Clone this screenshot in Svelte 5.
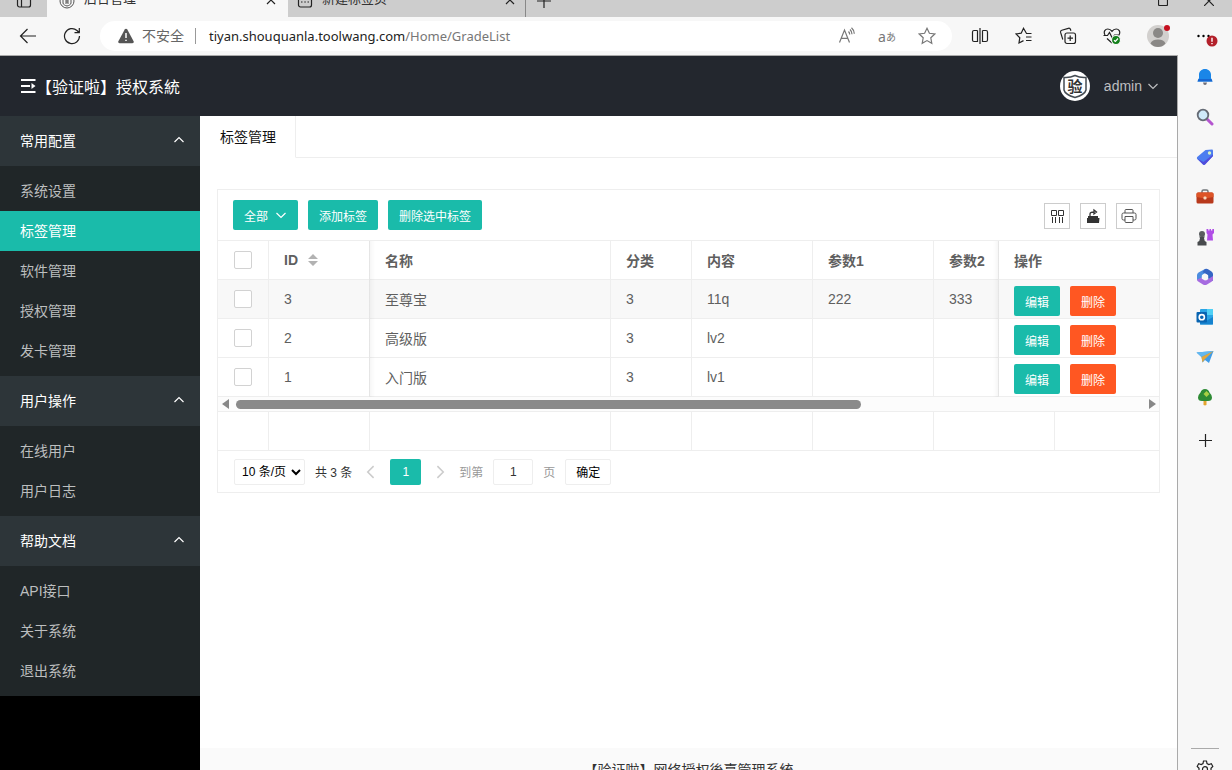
<script lang="ts">
  type Row = { id: number; name: string; type: string; content: string; p1: string; p2: string };

  const menu = [
    { title: '常用配置', items: ['系统设置', '标签管理', '软件管理', '授权管理', '发卡管理'] },
    { title: '用户操作', items: ['在线用户', '用户日志'] },
    { title: '帮助文档', items: ['API接口', '关于系统', '退出系统'] }
  ];

  let active = $state('标签管理');
  let hovered = $state(3);
  let page = $state('1');
  let selected: number[] = $state([]);

  const rows: Row[] = [
    { id: 3, name: '至尊宝', type: '3', content: '11q', p1: '222', p2: '333' },
    { id: 2, name: '高级版', type: '3', content: 'lv2', p1: '', p2: '' },
    { id: 1, name: '入门版', type: '3', content: 'lv1', p1: '', p2: '' }
  ];

  function toggleAll(e: Event) {
    selected = (e.target as HTMLInputElement).checked ? rows.map((r) => r.id) : [];
  }
</script>

{#snippet chevron(dir: string)}
  <svg class="chevron {dir}" viewBox="0 0 12 12" width="12" height="12"><path d="M1.5 4 6 8.5 10.500 4" /></svg>
{/snippet}

{#snippet columns()}
  <colgroup>
    <col class="w-check" /><col class="w-id" /><col class="w-name" /><col class="w-type" />
    <col class="w-param" /><col class="w-param" /><col class="w-param" /><col /><col class="w-action" />
  </colgroup>
{/snippet}

<div class="window">
  <div class="tabstrip">
    <button class="strip-btn" aria-label="标签页操作">
      <svg class="line" viewBox="0 0 16 16" width="16" height="16"><rect x="1.500" y="1.500" width="13" height="12.500" rx="2" /><path d="M5.500 5v9M1.500 5h13" /></svg>
    </button>
    <div class="btab current">
      <svg class="fav" viewBox="0 0 16 16" width="16" height="16"><circle cx="8" cy="8" r="7" /><path d="M4 4.500 8 3l4 1.500V10c0 1.500-2 2.500-4 3-2-.5-4-1.500-4-3zM6 6h4M6 8h4M6 10h4M8 6v4" /></svg>
      <span>后台管理</span>
      <button aria-label="关闭"><svg class="line" viewBox="0 0 10 10" width="10" height="10"><path d="m1 1 8 8M9 1 1 9" /></svg></button>
    </div>
    <div class="btab other">
      <svg class="line" viewBox="0 0 16 16" width="16" height="16"><rect x="1.500" y="2" width="13" height="12" rx="2" /><path d="M1.500 5h13M4 9h1.500M7.300 9h1.500M10.500 9H12" /></svg>
      <span>新建标签页</span>
      <button aria-label="关闭"><svg class="line" viewBox="0 0 10 10" width="10" height="10"><path d="m1 1 8 8M9 1 1 9" /></svg></button>
    </div>
    <button class="plus" aria-label="新建"><svg class="line" viewBox="0 0 14 14" width="14" height="14"><path d="M7 0v14M0 7h14" /></svg></button>
    <div class="winbtns">
      <svg class="line" viewBox="0 0 10 10" width="10" height="10"><rect x=".5" y=".5" width="9" height="9" rx="1" /></svg>
      <svg class="line" viewBox="0 0 10 10" width="10" height="10"><path d="m0 0 10 10M10 0 0 10" /></svg>
    </div>
  </div>

  <div class="toolbar">
    <button class="tool" aria-label="返回"><svg class="line" viewBox="0 0 18 18" width="18" height="18"><path d="M17 9H1.500M8.500 2l-7 7 7 7" /></svg></button>
    <button class="tool" aria-label="刷新"><svg class="line" viewBox="0 0 18 18" width="18" height="18"><path d="M16.500 9A7.500 7.500 0 1 1 14 3.500L16 5.500M16.300 1v4.700h-4.800" /></svg></button>
    <div class="address">
      <svg class="warn" viewBox="0 0 16 16" width="16" height="16"><path d="M8 .8c.6 0 1 .3 1.300.8l6.300 11.700c.5 1-.1 1.900-1.200 1.900H1.600c-1.100 0-1.700-.9-1.200-1.900L6.700 1.600C7 1.100 7.400.8 8 .8z" /><path class="mark" d="M8 5v5M8 11.700v1.400" /></svg>
      <span class="unsafe">不安全</span>
      <span class="url"><b>tiyan.shouquanla.toolwang.com</b>/Home/GradeList</span>
      <button class="tool" aria-label="朗读"><svg class="line gray" viewBox="0 0 18 18" width="18" height="18"><path d="M1.500 15.500 6.500 3l5 12.500M3.200 11.300h6.600M10.500 4.500q1.200 1.200 1.200 3M12 2.500q2 2 2 4.800M13.500.8q2.800 2.500 2.800 6" /></svg></button>
      <button class="tool translate" aria-label="翻译">a<small>あ</small></button>
      <button class="tool" aria-label="收藏"><svg class="line gray" viewBox="0 0 18 18" width="18" height="18"><path d="m9 1.300 2.400 5 5.400.7-4 3.800 1 5.500L9 13.600l-4.800 2.700 1-5.500-4-3.800 5.400-.7z" /></svg></button>
    </div>
    <div class="tools">
      <button class="tool" aria-label="分屏"><svg class="line" viewBox="0 0 18 18" width="18" height="18"><path d="M6.500 3.500H3a1.500 1.500 0 0 0-1.500 1.500v8A1.500 1.500 0 0 0 3 14.500h3.500V3.500M11.500 3.500H15A1.500 1.500 0 0 1 16.500 5v8a1.500 1.500 0 0 1-1.500 1.500h-3.500V3.500M9 1v16" /></svg></button>
      <button class="tool" aria-label="收藏夹"><svg class="line" viewBox="0 0 18 18" width="18" height="18"><path d="M16.500 6.500h-5L8.500 1.300 6.200 6.200 1 7l3.800 3.700L4 16l4.500-2.400M11 10h5.500M11 13.500h5.500" /></svg></button>
      <button class="tool" aria-label="集锦"><svg class="line" viewBox="0 0 18 18" width="18" height="18"><rect x="6" y="6" width="10.500" height="10.500" rx="2" /><path d="M11.200 8.500v5.500M8.500 11.200H14M3.800 12.500 1.600 5.400a1.800 1.800 0 0 1 1.200-2.200l6.500-1.900a1.800 1.800 0 0 1 2.200 1.200l.4 1.300" /></svg></button>
      <button class="tool" aria-label="浏览器概要"><svg class="line" viewBox="0 0 18 18" width="18" height="18"><path d="M2 8C0 4.500 2.500 2 4.800 2 7 2 8.300 3.300 9 4.300 9.700 3.300 11 2 13.200 2 15.500 2 18 4.500 16 8M.5 8.500h4l2-3 3 6 2-3.500h5M4 11.500l5 4.500" /><circle class="ok" cx="13" cy="13" r="4.500" /><path class="tick" d="m11 13.200 1.400 1.300 2.600-3" /></svg></button>
      <button class="tool profile" aria-label="个人资料">
        <svg viewBox="0 0 24 24" width="24" height="24"><circle cx="11" cy="12" r="11" fill="#d2d0ce" /><circle cx="11" cy="9" r="5" fill="#8a8886" /><path d="M3.500 19.500Q5 15.500 11 15.500t7.500 4Q15.500 23 11 23t-7.500-3.500z" fill="#8a8886" /><circle cx="20" cy="4" r="3" fill="#c50f1f" /></svg>
      </button>
      <button class="tool" aria-label="更多">
        <svg viewBox="0 0 24 24" width="24" height="24"><circle cx="4.500" cy="12" r="1.200" /><circle cx="9.500" cy="12" r="1.200" /><circle cx="14.500" cy="12" r="1.200" /><circle cx="18" cy="17" r="5.500" fill="#b3202a" /><path d="M18 13.800v4M18 19v1.300" stroke="#fff" stroke-width="1.400" /></svg>
      </button>
    </div>
  </div>

  <div class="below">
    <div class="app">
      <header>
        <a class="logo" href="/Home">
          <svg viewBox="0 0 16 16" width="16" height="16"><path d="M1 2h14.500M1 8h9M1 14h14.500" stroke="#fff" stroke-width="1.800" /><path d="M11.500 5l4 3-4 3z" fill="#fff" /></svg>【验证啦】授权系統
        </a>
        <button class="user">
          <svg class="face" viewBox="0 0 30 30" width="30" height="30"><circle cx="15" cy="15" r="15" fill="#fff" /><path d="M4 6.500Q10 7 15 4.500 20 7 26 6.500V19q-1 4.500-11 7.500Q5 23.500 4 19z" fill="none" stroke="#444b52" stroke-width="1.500" /><text x="15" y="20.500" text-anchor="middle">验</text></svg>
          <span>admin</span>
          {@render chevron('down')}
        </button>
      </header>

      <div class="layout">
        <nav>
          {#each menu as group}
            <section>
              <button class="group">{group.title}{@render chevron('up')}</button>
              <ul>
                {#each group.items as item}
                  <li><a href="#{item}" class:active={active === item} onclick={() => (active = item)}>{item}</a></li>
                {/each}
              </ul>
            </section>
          {/each}
        </nav>

        <main>
          <div class="pagetabs"><a href="#tab">标签管理</a></div>
          <div class="content">
            <div class="card">
              <div class="actions">
                <button class="btn">全部 {@render chevron('down')}</button>
                <button class="btn">添加标签</button>
                <button class="btn">删除选中标签</button>
                <div class="self">
                  <button aria-label="筛选列"><svg viewBox="0 0 16 16" width="16" height="16"><path d="M2.500 2.500h5v5h-5zM9.500 2.500h5v5h-5zM3.500 9v6M6.500 9v6M10.500 9v6M13.500 9v6" fill="none" stroke="#333" /></svg></button>
                  <button aria-label="导出"><svg viewBox="0 0 16 16" width="16" height="16"><path d="M2 10h12.500L14 15H2zM3 8h10v2H3z" fill="#333" /><path d="M5 8V6q0-2 4-2M9 2l2.500 2L9 6z" fill="none" stroke="#333" stroke-width="1.300" /></svg></button>
                  <button aria-label="打印"><svg viewBox="0 0 16 16" width="16" height="16"><path d="M4 5V2.500Q4 1.500 5 1.500h6q1 0 1 1V5M4 12H2.500Q1 12 1 10.500v-4Q1 5 2.500 5h11Q15 5 15 6.500v4q0 1.500-1.500 1.500H12M4 8.500h8v5q0 1-1 1H5q-1 0-1-1z" fill="none" stroke="#555" /></svg></button>
                </div>
              </div>

              <div class="scroll">
                <table>
                  {@render columns()}
                  <thead>
                    <tr>
                      <th><input type="checkbox" aria-label="全选" onchange={toggleAll} /></th>
                      <th class="pin-left">
                        ID <svg class="sort" viewBox="0 0 10 12" width="10" height="12"><path d="M0 5l5-5 5 5zM0 7h10l-5 5z" /></svg>
                      </th>
                      <th>名称</th>
                      <th>分类</th>
                      <th>内容</th>
                      <th>参数1</th>
                      <th>参数2</th>
                      <th></th>
                      <th class="pin-right">操作</th>
                    </tr>
                  </thead>
                  <tbody>
                    {#each rows as row}
                      <tr class:hover={hovered === row.id} onmouseenter={() => (hovered = row.id)}>
                        <td><input type="checkbox" aria-label={row.name} value={row.id} bind:group={selected} /></td>
                        <td class="pin-left">{row.id}</td>
                        <td>{row.name}</td>
                        <td>{row.type}</td>
                        <td>{row.content}</td>
                        <td>{row.p1}</td>
                        <td>{row.p2}</td>
                        <td></td>
                        <td class="pin-right">
                          <div class="ops">
                            <button class="btn">编辑</button>
                            <button class="btn danger">删除</button>
                          </div>
                        </td>
                      </tr>
                    {/each}
                  </tbody>
                </table>
              </div>

              <div class="bar">
                <svg viewBox="0 0 8 10" width="8" height="10"><path d="M7 0v10L0 5z" /></svg>
                <div class="track"><div class="thumb"></div></div>
                <svg viewBox="0 0 8 10" width="8" height="10"><path d="M1 0v10l7-5z" /></svg>
              </div>

              <div class="scroll">
                <table class="total">
                  {@render columns()}
                  <tbody>
                    <tr><td></td><td></td><td></td><td></td><td></td><td></td><td></td><td></td><td></td></tr>
                  </tbody>
                </table>
              </div>

              <div class="pager">
                <select aria-label="每页条数"><option>10 条/页</option></select>
                <span class="count">共 3 条</span>
                <button class="step" aria-label="上一页">{@render chevron('left')}</button>
                <button class="cur">1</button>
                <button class="step" aria-label="下一页">{@render chevron('right')}</button>
                <label for="page">到第</label>
                <input id="page" type="text" bind:value={page} />
                <span>页</span>
                <button class="go">确定</button>
              </div>
            </div>
          </div>
          <footer><p>【验证啦】网络授权後臺管理系統</p></footer>
        </main>
      </div>
    </div>

    <aside>
      <button aria-label="通知"><svg viewBox="0 0 18 18" width="18" height="18"><path d="M9 1C5.500 1 3 3.500 3 6.500V10l-1.500 3.500h15L15 10V6.500C15 3.500 12.500 1 9 1z" fill="#1a86e8" /><path d="M2.500 11h13l1 2.500h-15z" fill="#1766d0" /><path d="M7 14.500h4q-.4 2.500-2 2.500t-2-2.500z" fill="#6d6d78" /></svg></button>
      <button aria-label="搜索"><svg viewBox="0 0 18 18" width="18" height="18"><path d="m10.500 10.500 5.500 5.500" stroke="#b455cf" stroke-width="3" stroke-linecap="round" /><circle cx="7" cy="7" r="5.300" fill="#cfeafa" stroke="#656b75" stroke-width="1.800" /></svg></button>
      <button aria-label="购物"><svg viewBox="0 0 18 18" width="18" height="18"><path d="M9.500 2 16 1.500q1 0 1 1V8L9 16.500q-1 .8-2 0L1.200 11q-.8-1 0-2z" fill="#4c7df0" /><path d="M1.200 10.500 7.500 14 17 6.500V8L9 16.500q-1 .8-2 0z" fill="#514cdb" /><circle cx="13.500" cy="5" r="1.700" fill="#d6f0c4" /></svg></button>
      <button aria-label="工具"><svg viewBox="0 0 18 18" width="18" height="18"><path d="M6 5V3.500Q6 2 7.500 2h3Q12 2 12 3.500V5" fill="none" stroke="#72767a" stroke-width="1.500" /><rect x="0.500" y="4.500" width="17" height="11" rx="1.500" fill="#b8391c" /><path d="M.5 6q0-1.500 1.500-1.500h14q1.500 0 1.500 1.500v3L9 10.500.5 9z" fill="#dd5427" /><rect x="7.500" y="8.500" width="3" height="3" rx="1" fill="#f7d9c0" /></svg></button>
      <button aria-label="游戏"><svg viewBox="0 0 18 18" width="18" height="18"><path d="M10.500 1h1.800v1.500h1.200V1h1.500v1.500h1.300V1H18v4l-1.500 1.500.5 6h-6l.5-6L10.500 5z" fill="#b04ee6" /><circle cx="6" cy="6" r="3" fill="#5a5d60" /><path d="M3 8.500h6l-1 1.500q0 3 2.500 4v3.500h-9V14Q4 13 4 10z" fill="#484b4e" /></svg></button>
      <button aria-label="Microsoft 365"><svg viewBox="0 0 18 18" width="18" height="18"><path d="M9 1 2.500 4.500Q1 5.500 1 7v5.500l5-2.700V7l5-3z" fill="#4c8de0" /><path d="M9 1q2-.5 3.500.5L15.500 3.500Q17 4.500 17 6v7l-5-2.500V7L6.500 4z" fill="#3565c4" /><path d="M17 8v3.500q0 1.500-1.500 2.300L11 16.500q-2 1-4 0L3 14Q1 13 1 11.500l5-2 4 3z" fill="#a66be0" /><path d="m9 5.800 3.200 1.700v3.300L9 12.500l-3.200-1.700V7.500z" fill="#f7f7f7" /></svg></button>
      <button aria-label="Outlook"><svg viewBox="0 0 18 18" width="18" height="18"><rect x="4" y="1" width="13" height="15.500" rx="1" fill="#2aa5e6" /><path d="M11 1h6v6h-6z" fill="#50d0f5" /><path d="m4 9 7 3.500L17 9v7.500H4z" fill="#1683cf" /><rect x=".5" y="4" width="10.500" height="10.500" rx="1" fill="#0864b1" /><circle cx="5.800" cy="9.200" r="2.600" fill="none" stroke="#fff" stroke-width="1.600" /></svg></button>
      <button aria-label="Drop"><svg viewBox="0 0 18 18" width="18" height="18"><path d="M.5 4.500 17.500 3 13 15l-4-3-2.500 2.500L5.500 9z" fill="#3f9ce8" /><path d="M.5 4.500 17.500 3 5.500 9z" fill="#62b8ef" /><path d="M5.500 9 17.500 3 8.500 11.500l-2 3z" fill="#e2a73d" /></svg></button>
      <button aria-label="电子树"><svg viewBox="0 0 18 18" width="18" height="18"><path d="M7.500 11h3v6q-1.500.8-3 0z" fill="#e3a52f" /><path d="M9 1q3.500 0 4.500 3.500 2.500 2.500 2.500 5Q16 13 12 13H6Q2 13 2 9.500q0-2.500 2.500-5Q5.500 1 9 1z" fill="#2e8b35" /><path d="m10.500 3 3 3-3 3-3-3z" fill="#a8cf45" /></svg></button>
      <button class="add" aria-label="添加"><svg class="line" viewBox="0 0 13 13" width="13" height="13"><path d="M6.500 0v13M0 6.500h13" /></svg></button>
      <div class="settings">
        <button aria-label="设置"><svg class="line" viewBox="0 0 18 18" width="18" height="18"><path d="M7.500 1h3l.5 2.500 1.800 1 2.500-.8 1.500 2.600L15 8.300v1.900l1.800 1.700-1.500 2.600-2.500-.8-1.800 1-.5 2.500h-3L7 14.700l-1.800-1-2.500.8-1.500-2.600L3 10.200V8.300L1.200 6.300l1.500-2.600 2.500.8 1.800-1z" /><circle cx="9" cy="9.200" r="2.500" /></svg></button>
      </div>
    </aside>
  </div>

  <svg class="pointer" viewBox="0 0 28 32" width="28" height="32">
    <circle cx="13.500" cy="13.500" r="13.500" fill="#0bfb3c" />
    <path d="M13.500 13.500v15.500l3.500-3.300 2.500 5.500 2.200-1-2.400-5.400h4.700z" fill="#fff" stroke="#222" />
  </svg>
</div>

<style>
  :global(body) {
    font-family: 'Liberation Sans', 'Noto Sans CJK SC', sans-serif;
    font-size: 14px;
    color: #333;
  }

  .window {
    position: relative;
    height: 100vh;
    display: flex;
    flex-direction: column;
    overflow: hidden;
    background: #f7f7f7;
  }

  button,
  input,
  select {
    font: inherit;
    color: inherit;
    margin: 0;
    padding: 0;
    border: 0;
    background: none;
    box-sizing: border-box;
  }

  a {
    color: inherit;
    text-decoration: none;
  }

  svg {
    flex: none;
  }

  .line {
    fill: none;
    stroke: #222;
    stroke-width: 1.2;
  }

  .gray {
    stroke: #777;
  }

  .chevron {
    fill: none;
    stroke: currentColor;
    stroke-width: 1.2;
  }

  .up {
    transform: rotate(180deg);
  }

  .left {
    transform: rotate(90deg) scale(1.3);
  }

  .right {
    transform: rotate(-90deg) scale(1.3);
  }

  /* browser chrome */
  .tabstrip {
    height: 17px;
    display: flex;
    align-items: flex-end;
    background: #cdcdcd;
    overflow: hidden;
  }

  .strip-btn {
    width: 47px;
    height: 32px;
    display: grid;
    place-items: center;
  }

  .btab {
    width: 241px;
    height: 32px;
    padding: 0 12px;
    box-sizing: border-box;
    display: flex;
    align-items: center;
    gap: 9px;
    font-size: 13px;
    line-height: 28px;
  }

  .btab.current {
    background: #f7f7f7;
  }

  .btab.other {
    width: 237px;
    padding: 0 10px 0 9px;
  }

  .btab span {
    flex: 1;
    height: 32px;
  }

  .fav {
    fill: none;
    stroke: #555;
  }

  .plus {
    height: 32px;
    width: 36px;
    display: grid;
    place-items: center;
    border-left: 1px solid #888;
  }

  .winbtns {
    height: 32px;
    margin-left: auto;
    padding-right: 18px;
    display: flex;
    align-items: center;
    gap: 36px;
  }

  .toolbar {
    height: 38px;
    padding: 0 6px 0 8px;
    display: flex;
    align-items: center;
    gap: 4px;
  }

  .tool {
    width: 40px;
    height: 30px;
    display: grid;
    place-items: center;
  }

  .address {
    flex: 1;
    height: 30px;
    margin: 0 4px;
    padding: 0 5px 0 18px;
    display: flex;
    align-items: center;
    border-radius: 15px;
    background: #fff;
  }

  .warn {
    fill: #555;
  }

  .mark {
    stroke: #fff;
    stroke-width: 1.5;
  }

  .unsafe {
    padding: 0 11px 0 8px;
    border-right: 1px solid #999;
    line-height: 16px;
    color: #666;
  }

  .url {
    flex: 1;
    padding-left: 13px;
    font-family: 'Noto Sans', sans-serif;
    font-size: 13px;
    color: #777;
  }

  .url b {
    font-weight: 400;
    color: #222;
  }

  .translate {
    display: flex;
    align-items: center;
    justify-content: center;
    font-family: 'Noto Sans', 'Noto Sans CJK JP', sans-serif;
    color: #777;
  }

  .translate small {
    font-size: 10px;
  }

  .tools {
    display: flex;
    gap: 4px;
  }

  .tools .profile {
    width: 46px;
  }

  .ok {
    fill: #13801b;
    stroke: #f7f7f7;
  }

  .tick {
    stroke: #fff;
  }

  .below {
    flex: 1;
    min-height: 0;
    display: flex;
  }

  aside {
    width: 54px;
    padding-top: 2px;
    display: flex;
    flex-direction: column;
    align-items: center;
  }

  aside button {
    width: 40px;
    height: 40px;
    flex: none;
    display: grid;
    place-items: center;
  }

  aside .add {
    margin-top: 3px;
  }

  .settings {
    height: 21px;
    width: 28px;
    margin-top: auto;
    border-top: 1px solid #aaa;
    display: flex;
    justify-content: center;
    overflow: hidden;
  }

  /* admin app */
  .app {
    flex: 1;
    min-width: 0;
    display: flex;
    flex-direction: column;
    border-top: 1px solid #aaa;
    border-right: 1px solid #aaa;
    background: #fff;
  }

  header {
    height: 60px;
    flex: none;
    padding: 0 18px 0 20px;
    display: flex;
    align-items: center;
    justify-content: space-between;
    background: #23272e;
  }

  .logo {
    display: flex;
    align-items: center;
    font-size: 16px;
    color: #fff;
  }

  .user {
    display: flex;
    align-items: center;
    color: #bdbec0;
  }

  .user span {
    margin: 0 5px 0 14px;
  }

  .face text {
    font-size: 15px;
    font-weight: 700;
    fill: #333;
  }

  .layout {
    flex: 1;
    min-height: 0;
    display: flex;
  }

  nav {
    width: 200px;
    flex: none;
    background: #000;
  }

  section {
    background: #202628;
  }

  .group {
    width: 100%;
    height: 50px;
    padding: 0 15px 2px 20px;
    display: flex;
    align-items: center;
    justify-content: space-between;
    background: #2d3539;
    color: #fff;
  }

  ul {
    margin: 0;
    padding: 5px 0;
    list-style: none;
  }

  li a {
    display: block;
    padding-left: 20px;
    line-height: 40px;
    color: #bcbebf;
  }

  li a.active {
    background: #1abbaa;
    color: #fff;
  }

  main {
    flex: 1;
    min-width: 0;
    display: flex;
    flex-direction: column;
  }

  .pagetabs {
    display: flex;
    border-bottom: 1px solid #eee;
  }

  .pagetabs a {
    padding: 1px 19px 0 20px;
    line-height: 40px;
    margin-bottom: -1px;
    border-right: 1px solid #eee;
    border-bottom: 1px solid #fff;
    color: #111;
  }

  .content {
    flex: 1;
    padding: 31px 17px;
  }

  .card {
    border: 1px solid #eee;
  }

  .actions {
    height: 50px;
    padding: 0 17px 0 15px;
    display: flex;
    align-items: center;
    gap: 10px;
    border-bottom: 1px solid #eee;
  }

  .btn {
    height: 30px;
    padding: 0 11px;
    display: flex;
    align-items: center;
    gap: 7px;
    border-radius: 2px;
    background: #1abbaa;
    color: #fff;
    font-size: 12px;
  }

  .danger {
    background: #ff5722;
  }

  .self {
    margin-left: auto;
    padding-top: 2px;
    display: flex;
    gap: 10px;
  }

  .self button {
    width: 26px;
    height: 26px;
    display: grid;
    place-items: center;
    border: 1px solid #ccc;
  }

  .scroll {
    overflow: hidden;
  }

  table {
    width: 1361px;
    min-width: 100%;
    table-layout: fixed;
    border-collapse: separate;
    border-spacing: 0;
    color: #5f5f5f;
  }

  .w-check {
    width: 51px;
  }

  .w-id {
    width: 101px;
  }

  .w-name {
    width: 241px;
  }

  .w-type {
    width: 81px;
  }

  .w-param {
    width: 121px;
  }

  .w-action {
    width: 161px;
  }

  th,
  td {
    height: 38px;
    box-sizing: content-box;
    padding: 0 15px;
    text-align: left;
    border-right: 1px solid #eee;
    border-bottom: 1px solid #eee;
    background: #fff;
  }

  th:first-child,
  td:first-child {
    padding: 0 16px;
  }

  .hover td {
    background: #f8f8f8;
  }

  .pin-left,
  .pin-right {
    position: sticky;
    left: 51px;
    z-index: 1;
  }

  .pin-right {
    left: auto;
    right: 0;
    border-right: 0;
    border-left: 1px solid #eee;
  }

  .pin-left::after,
  .pin-right::after {
    content: '';
    position: absolute;
    top: 0;
    bottom: -1px;
    left: 100%;
    width: 6px;
    background: linear-gradient(to right, rgba(0, 0, 0, 0.04), transparent);
  }

  .pin-right::after {
    left: auto;
    right: 100%;
    background: linear-gradient(to left, rgba(0, 0, 0, 0.04), transparent);
  }

  .sort {
    margin-left: 6px;
    vertical-align: -1px;
    fill: #b2b2b2;
  }

  input[type='checkbox'] {
    appearance: none;
    display: block;
    width: 18px;
    height: 18px;
    border: 1px solid #d2d2d2;
    border-radius: 2px;
    background: #fff;
  }

  input[type='checkbox']:checked {
    background: #1abbaa;
  }

  .ops {
    display: flex;
    gap: 10px;
    padding-top: 4px;
  }

  .bar {
    height: 14px;
    padding: 0 3px 0 4px;
    display: flex;
    align-items: center;
    gap: 6px;
    border-bottom: 1px solid #eee;
    background: #fcfcfc;
    fill: #888;
  }

  .track {
    flex: 1;
  }

  .thumb {
    width: 69%;
    height: 9px;
    border-radius: 5px;
    background: #8a8a8a;
  }

  .pager {
    height: 41px;
    padding-left: 16px;
    display: flex;
    align-items: center;
    gap: 10px;
    font-size: 12px;
    color: #999;
  }

  .pager select {
    width: 71px;
    height: 26px;
    padding-left: 3px;
    border: 1px solid #eee;
    border-radius: 2px;
    background: #fff;
    color: #000;
  }

  .count {
    color: #333;
  }

  .step {
    width: 18px;
    height: 26px;
    display: grid;
    place-items: center;
    color: #ccc;
  }

  .cur {
    width: 31px;
    height: 26px;
    border-radius: 2px;
    background: #1abbaa;
    color: #fff;
  }

  .pager input {
    width: 40px;
    height: 26px;
    border: 1px solid #eee;
    border-radius: 2px;
    text-align: center;
    color: #333;
  }

  .go {
    width: 46px;
    height: 26px;
    border: 1px solid #eee;
    border-radius: 2px;
    color: #000;
  }

  footer {
    height: 22px;
    overflow: hidden;
    background: #fafafa;
    text-align: center;
  }

  footer p {
    margin: 0;
    line-height: 44px;
  }

  .pointer {
    position: absolute;
    left: 326px;
    top: 280px;
  }
</style>
